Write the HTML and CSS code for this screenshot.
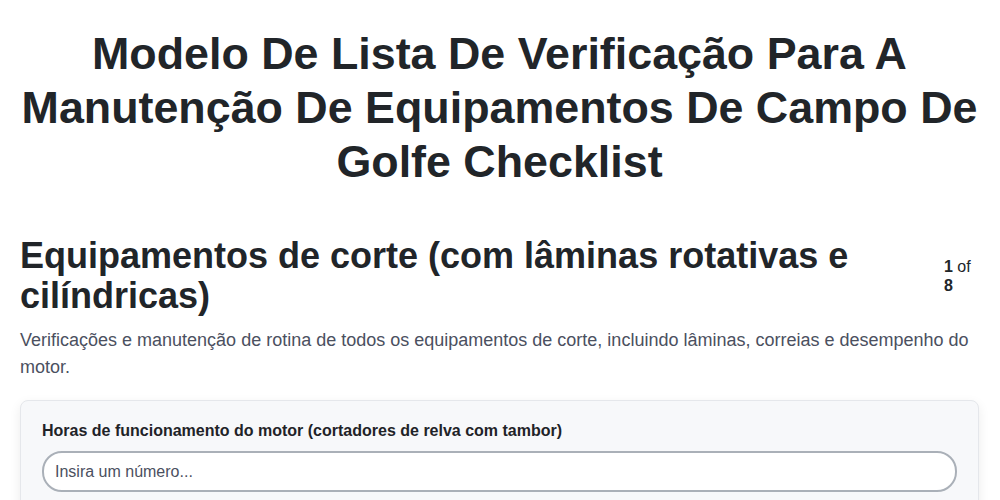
FILE: index.html
```html
<!DOCTYPE html>
<html lang="pt">
<head>
<meta charset="utf-8">
<title>Modelo De Lista De Verificação</title>
<link rel="stylesheet" href="styles.css">
</head>
<body>
<main class="page">
  <h1 class="page-title">Modelo De Lista De Verificação Para A Manutenção De Equipamentos De Campo De Golfe Checklist</h1>

  <section class="section">
    <header class="section-head">
      <h2 class="section-title">Equipamentos de corte (com lâminas rotativas e cilíndricas)</h2>
      <div class="section-count"><strong>1</strong> of <strong>8</strong></div>
    </header>
    <p class="section-desc">Verificações e manutenção de rotina de todos os equipamentos de corte, incluindo lâminas, correias e desempenho do motor.</p>

    <div class="card">
      <label class="field-label" for="horas">Horas de funcionamento do motor (cortadores de relva com tambor)</label>
      <input class="field-input" id="horas" type="text" placeholder="Insira um número...">
    </div>
  </section>
</main>
</body>
</html>
```

FILE: styles.css
```css
* {
  box-sizing: border-box;
}

body {
  margin: 0;
  background: #ffffff;
  color: #212529;
  font-family: "Liberation Sans", Arial, sans-serif;
}

.page {
  padding: 0 21px 0 20px;
}

.page-title {
  margin: 26px 0 48px;
  font-size: 44.8px;
  line-height: 54px;
  font-weight: 700;
  text-align: center;
  color: #212529;
}

.section-head {
  display: flex;
  align-items: center;
  gap: 24px;
}

.section-title {
  flex: 1;
  margin: 0;
  font-size: 36px;
  line-height: 1.1;
  font-weight: 700;
  color: #212529;
}

.section-count {
  width: 35px;
  font-size: 16px;
  line-height: 19px;
  color: #212529;
}

.section-desc {
  margin: 12px 0 19px;
  font-size: 18px;
  line-height: 27px;
  color: #4b5060;
}

.card {
  background: #f7f8fa;
  border: 1px solid #e5e7eb;
  border-radius: 8px;
  box-shadow: 0 4px 12px rgba(0, 0, 0, 0.08);
  padding: 20px 21px;
}

.field-label {
  display: block;
  margin-bottom: 10px;
  font-size: 16px;
  line-height: 20px;
  font-weight: 700;
  color: #1f2328;
}

.field-input {
  display: block;
  width: 100%;
  height: 41px;
  padding: 0 11px;
  border: 2px solid #aab0b8;
  border-radius: 20px;
  background: #ffffff;
  font-family: "Liberation Sans", Arial, sans-serif;
  font-size: 16px;
  color: #212529;
}

.field-input::placeholder {
  color: #4b5060;
  opacity: 1;
}
```
